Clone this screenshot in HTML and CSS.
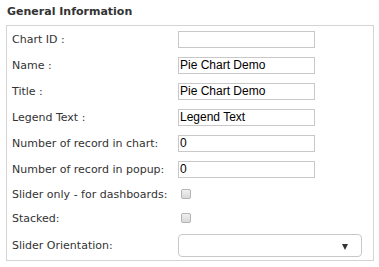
FILE: index.html
```html
<!DOCTYPE html>
<html>
<head>
  <title>General Information</title>
  <link rel="stylesheet" href="styles.css">
</head>
<body>

<h4 class="section-title">General Information</h4>

<div class="section-box">
  <table class="form-table">
    <tr class="row"><td class="label">Chart ID :</td><td><input class="text-input" type="text" value=""></td></tr>
    <tr class="row"><td class="label">Name :</td><td><input class="text-input" type="text" value="Pie Chart Demo"></td></tr>
    <tr class="row"><td class="label">Title :</td><td><input class="text-input" type="text" value="Pie Chart Demo"></td></tr>
    <tr class="row"><td class="label">Legend Text :</td><td><input class="text-input" type="text" value="Legend Text"></td></tr>
    <tr class="row"><td class="label">Number of record in chart:</td><td><input class="text-input" type="text" value="0"></td></tr>
    <tr class="row"><td class="label">Number of record in popup:</td><td><input class="text-input" type="text" value="0"></td></tr>
    <tr class="row-check"><td class="label">Slider only - for dashboards:</td><td><span class="check"></span></td></tr>
    <tr class="row-check"><td class="label">Stacked:</td><td><span class="check"></span></td></tr>
    <tr class="row-select"><td class="label">Slider Orientation:</td><td><div class="select"><span class="arrow"></span></div></td></tr>
  </table>
</div>

</body>
</html>
```

FILE: styles.css
```css
body { margin: 0; background: #fff; font-family: "DejaVu Sans", Verdana, sans-serif; color: #333; }
.section-title { margin: 0; padding: 5px 0 0 7px; height: 20px; font-size: 11px; font-weight: bold; line-height: 14px; color: #333; }
.section-box { margin-left: 6px; width: 366px; border: 1px solid #d4d4d4; }
.form-table { border-collapse: collapse; width: 100%; }
.form-table td { padding: 0; vertical-align: middle; }
.label { width: 166px; padding-left: 5px !important; font-size: 11px; color: #333; }
.row { height: 26px; }
.row-check { height: 24px; }
.row-select { height: 30px; }
.text-input { display: block; box-sizing: border-box; width: 137px; height: 17px; margin: 0; padding: 0 1px; border: 1px solid #c8c8c8; font-family: "Liberation Sans", Arial, sans-serif; font-size: 12px; color: #000; outline: none; }
.check { display: block; box-sizing: border-box; width: 10px; height: 10px; margin-left: 3px; border: 1px solid #b4b4b4; border-radius: 2px; background: linear-gradient(#f0f0f0, #d8d8d8); }
.select { position: relative; box-sizing: border-box; width: 184px; height: 23px; border: 1px solid #c8c8c8; border-radius: 4px; background: #fff; margin-top: 1px; }
.arrow { position: absolute; right: 13px; top: 9px; width: 0; height: 0; border-left: 3.5px solid transparent; border-right: 3.5px solid transparent; border-top: 6px solid #333; }
```
